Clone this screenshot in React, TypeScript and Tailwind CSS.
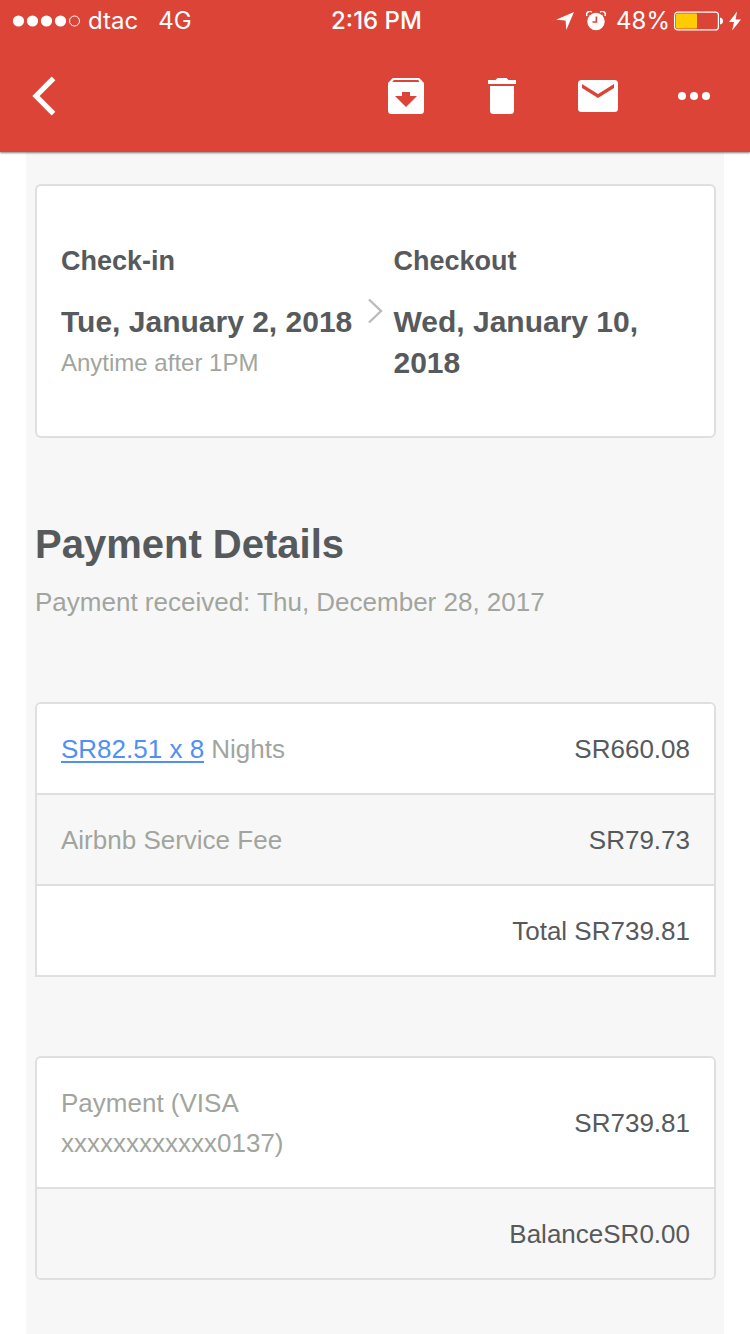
import type { ReactNode } from 'react';

interface Row {
  label: ReactNode;
  amount: string;
  shaded?: boolean;
}

const charges: Row[] = [
  {
    label: (
      <>
        <a href="#rate" className="text-[#508ff4] underline decoration-2 underline-offset-3">SR82.51 x 8</a> Nights
      </>
    ),
    amount: 'SR660.08',
  },
  { label: 'Airbnb Service Fee', amount: 'SR79.73', shaded: true },
  { label: '', amount: 'Total SR739.81' },
];

const payments: Row[] = [
  { label: 'Payment (VISA xxxxxxxxxxxx0137)', amount: 'SR739.81' },
  { label: '', amount: 'BalanceSR0.00', shaded: true },
];

const StatusBar = () => (
  <div className="grid h-10 grid-cols-[1fr_auto_1fr] items-center pt-px pl-3 pr-[9px] font-['Inter','Liberation_Sans',sans-serif] text-2xl">
    <div className="flex items-center">
      <svg width="70" height="14" viewBox="0 0 70 14" fill="#fff">
        <circle cx="6.5" cy="7" r="5.6" />
        <circle cx="20.5" cy="7" r="5.6" />
        <circle cx="34.5" cy="7" r="5.6" />
        <circle cx="48.5" cy="7" r="5.6" />
        <circle cx="62.5" cy="7" r="5" fill="none" stroke="#fff" />
      </svg>
      <span className="ml-1.5">dtac</span>
      <span className="ml-5">4G</span>
    </div>
    <span className="font-medium">2:16 PM</span>
    <div className="flex items-center justify-end">
      <svg width="18" height="18" viewBox="0 0 18 18" fill="#fff">
        <path d="M18 0 L10.3 18 L9.6 8.4 L0 7.7 Z" />
      </svg>
      <svg width="20" height="20" viewBox="0 0 20 20" className="ml-3">
        <path d="M1 5 A3.2 3.2 0 0 1 5.8 1 M14.2 1 A3.2 3.2 0 0 1 19 5" fill="none" stroke="#fff" strokeWidth="1.6" />
        <circle cx="10" cy="10.5" r="8.7" fill="#fff" />
        <path d="M10.4 5.5 V11 H6.5" fill="none" stroke="#db4437" strokeWidth="1.6" />
      </svg>
      <span className="ml-2.5">48%</span>
      <svg width="49" height="20" viewBox="0 0 49 20" className="ml-1">
        <rect x="0.6" y="1.1" width="43.8" height="17.8" rx="3" fill="none" stroke="#fff" strokeWidth="1.2" />
        <rect x="2" y="2.5" width="21" height="15" rx="1" fill="#fc0" />
        <path d="M46 6.5 Q49 7 49 10 Q49 13 46 13.5 Z" fill="#fff" />
      </svg>
      <svg width="12" height="20" viewBox="0 0 12 20" fill="#fff" className="ml-1.5">
        <path d="M8 0.5 L0 11 H5 L3.2 19.5 L12 8.5 H6.6 Z" />
      </svg>
    </div>
  </div>
);

const Toolbar = () => (
  <div className="flex h-28 items-center pl-7 pr-9">
    <button type="button" aria-label="Back" className="mr-auto">
      <svg width="32" height="40" viewBox="0 0 32 40" fill="none" stroke="#fff" strokeWidth="5.2">
        <path d="M25.5 2.4 L8 20 L25.5 37.6" />
      </svg>
    </button>
    <div className="flex items-center gap-14">
      <button type="button" aria-label="Archive">
        <svg width="40" height="40" viewBox="0 0 40 40">
          <path d="M6.8 2 H33.2 L38 7 V34.5 Q38 38 34.5 38 H5.5 Q2 38 2 34.5 V7 Z" fill="#fff" />
          <path d="M7.8 4 H32.2 L33.5 6 H6.5 Z M16 16 H24 V20 H31 L20 31 L9 20 H16 Z" fill="#db4437" />
        </svg>
      </button>
      <button type="button" aria-label="Delete">
        <svg width="40" height="40" viewBox="0 0 40 40" fill="#fff">
          <path d="M6 4 H13.5 L15.5 2 H24.5 L26.5 4 H34 V8 H6 Z" />
          <path d="M8 10 H32 V34.5 Q32 38 28.5 38 H11.5 Q8 38 8 34.5 Z" />
        </svg>
      </button>
      <button type="button" aria-label="Mark as unread">
        <svg width="40" height="40" viewBox="0 0 40 40">
          <rect x="0" y="4" width="40" height="32" rx="3.5" fill="#fff" />
          <path d="M4 8 L20 18 L36 8 V12 L20 22 L4 12 Z" fill="#db4437" />
        </svg>
      </button>
      <button type="button" aria-label="More">
        <svg width="40" height="40" viewBox="0 0 40 40" fill="#fff">
          <circle cx="8" cy="20" r="4" />
          <circle cx="20" cy="20" r="4" />
          <circle cx="32" cy="20" r="4" />
        </svg>
      </button>
    </div>
  </div>
);

const AmountTable = ({ rows, className }: { rows: Row[]; className: string }) => (
  <div className={`overflow-hidden border-2 border-[#dfdfdf] ${className}`}>
    <table className="w-full border-separate border-spacing-0 text-[26px] leading-10">
      <tbody>
        {rows.map((row) => (
          <tr key={row.amount} className={row.shaded ? 'group bg-[#f7f7f7]' : 'group bg-white'}>
            <td className="w-1/2 border-[#dfdfdf] pt-[25px] pb-6 pl-6 text-[#a1a59e] group-not-first:border-t-2">
              {row.label}
            </td>
            <td className="w-1/2 border-[#dfdfdf] pt-[25px] pb-6 pr-6 text-right text-[#565a5c] group-not-first:border-t-2">
              {row.amount}
            </td>
          </tr>
        ))}
      </tbody>
    </table>
  </div>
);

const App = () => {
  return (
    <div className="flex min-h-screen flex-col bg-white font-['Liberation_Sans',Arial,sans-serif]">
      <header className="relative bg-[#db4437] text-white shadow-[0_1px_2px_rgba(0,0,0,0.5)]">
        <StatusBar />
        <Toolbar />
      </header>

      <main className="mx-[26px] grow bg-[#f7f7f7] pt-8 pr-2 pb-14 pl-[9px]">
        <section className="grid grid-cols-[1fr_16px_1fr] gap-[10px] rounded-md border-2 border-[#dfdfdf] bg-white px-6 pt-[55px] pb-[52px] font-bold text-[#565a5c]">
          <div>
            <h3 className="text-[27px] leading-10">Check-in</h3>
            <p className="mt-5 text-[30px] leading-[41px] whitespace-nowrap">Tue, January 2, 2018</p>
            <p className="text-2xl leading-[42px] font-normal text-[#a1a59e]">Anytime after 1PM</p>
          </div>
          <svg width="16" height="30" viewBox="0 0 16 30" fill="none" stroke="#bbb" strokeWidth="2.4" className="self-center">
            <path d="M1 1.5 L13 13 L1 24.5" />
          </svg>
          <div>
            <h3 className="text-[27px] leading-10">Checkout</h3>
            <p className="mt-5 text-[30px] leading-[41px]">Wed, January 10, 2018</p>
          </div>
        </section>

        <h2 className="mt-20 text-[40px] leading-[52px] font-bold text-[#565a5c]">Payment Details</h2>
        <p className="mt-3 text-[26px] leading-10 text-[#a1a59e]">Payment received: Thu, December 28, 2017</p>

        <div className="mt-20 flex flex-col gap-[79px]">
          <AmountTable rows={charges} className="rounded-t-md" />
          <AmountTable rows={payments} className="rounded-md" />
        </div>
      </main>
    </div>
  );
};

export default App;
